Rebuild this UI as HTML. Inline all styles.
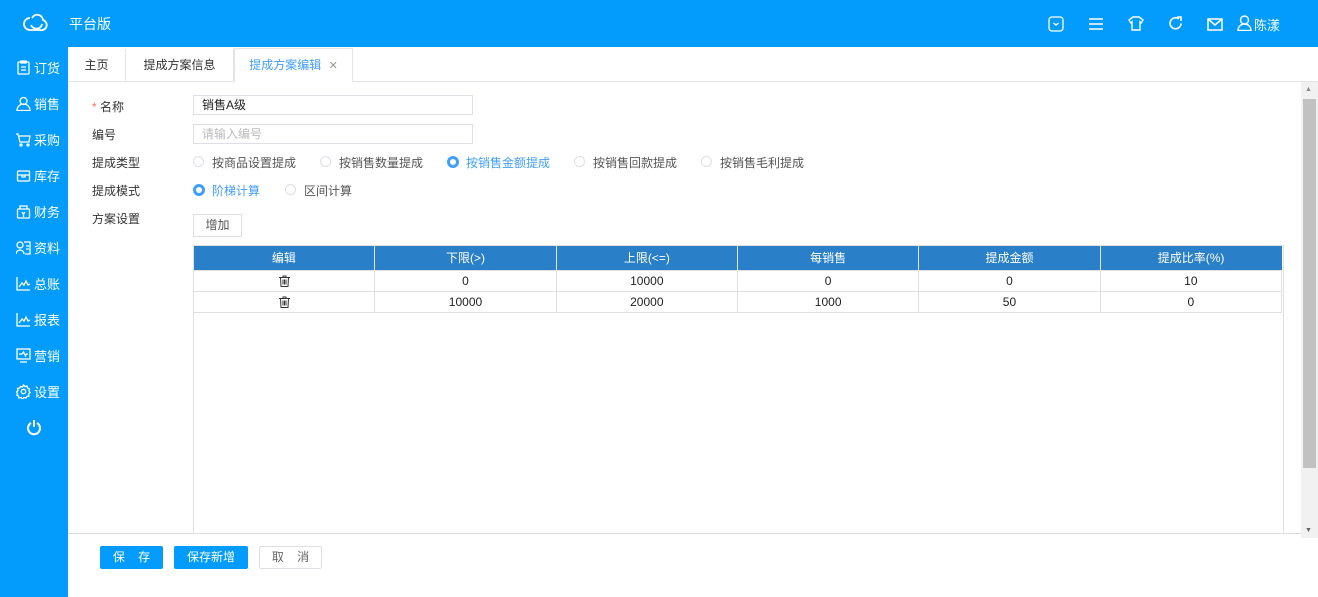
<!DOCTYPE html>
<html><head><meta charset="utf-8"><style>
*{margin:0;padding:0;box-sizing:border-box}
body{width:1318px;height:597px;position:relative;overflow:hidden;background:#fff;font-family:"Liberation Sans","Noto Sans CJK SC",sans-serif;font-size:12px;color:#333}
.a{position:absolute}
.top{left:0;top:0;width:1318px;height:47px;background:#039cfd}
.side{left:0;top:47px;width:68px;height:550px;background:#039cfd}
.nav{left:16px;color:#fff;font-size:13px;display:flex;align-items:center;gap:3px}
.nav svg{width:15px;height:15px}
.tabs{left:68px;top:47px;width:1250px;height:35px;border-bottom:1px solid #e4e4e4;background:#fff}
.tab{top:49px;height:33px;line-height:33px;font-size:12px;text-align:center;border-right:1px solid #e4e4e4}
.lbl{left:92px;font-size:12px;color:#333}
.inp{left:193px;width:280px;height:20px;border:1px solid #dcdfe6;padding-left:8px;line-height:18px;font-size:12px}
.r{width:11px;height:11px;border:1px solid #dcdfe6;border-radius:50%}
.r.on{border:3px solid #409eff;background:#fff;width:12px;height:12px}
.rt{font-size:12px;color:#555}
table{border-collapse:collapse;position:absolute;left:193px;top:246px;width:1089px;table-layout:fixed}
th{background:#2a7fc9;color:#fff;font-weight:normal;height:24px;border-right:1px solid #e6e6e6;font-size:12px}
td{height:21px;border:1px solid #e0e0e0;text-align:center;font-size:12px;color:#222}
td svg{vertical-align:middle}
.btn{top:546px;height:23px;line-height:23px;text-align:center;font-size:12px;border-radius:2px}
</style></head><body>
<div class="a top"></div>
<svg class="a" style="left:22px;top:12px" width="26" height="22" viewBox="0 0 26 22" fill="none" stroke="#fff" stroke-width="1.8"><path d="M8 18a6 6 0 0 1 0-12M10 6c3-5 10-4 11 2a5 5 0 0 1-3 10H8"/><path d="M9 13c2 5 10 5 11-1"/></svg>
<div class="a" style="left:69px;top:14px;color:#fff;font-size:14px">平台版</div>
<svg class="a" style="left:1048px;top:16px" width="16" height="16" viewBox="0 0 16 16" fill="none" stroke="#fff" stroke-width="1.3"><rect x="1" y="1" width="14" height="14" rx="3"/><path d="M5.5 7l2.5 2 2.5-2"/></svg>
<svg class="a" style="left:1089px;top:17px" width="14" height="14" viewBox="0 0 14 14" stroke="#fff" stroke-width="1.6"><path d="M0 2h14M0 7h14M0 12h14"/></svg>
<svg class="a" style="left:1128px;top:16px" width="16" height="15" viewBox="0 0 16 15" fill="none" stroke="#fff" stroke-width="1.4"><path d="M5 1h6l4 3-2 3-1-1v8H4V6L3 7 1 4z"/></svg>
<svg class="a" style="left:1168px;top:16px" width="15" height="15" viewBox="0 0 15 15" fill="none" stroke="#fff" stroke-width="1.6"><path d="M13 7.5A5.5 5.5 0 1 1 11 3"/><path d="M9 1h4v4" /></svg>
<svg class="a" style="left:1207px;top:18px" width="16" height="13" viewBox="0 0 16 13" fill="none" stroke="#fff" stroke-width="1.5"><rect x="1" y="1" width="14" height="11"/><path d="M1 1l7 6 7-6"/></svg>
<svg class="a" style="left:1237px;top:15px" width="15" height="16" viewBox="0 0 15 16" fill="none" stroke="#fff" stroke-width="1.4"><circle cx="7.5" cy="5" r="4"/><path d="M1 15.5a6.5 6.5 0 0 1 13 0z"/></svg>
<div class="a" style="left:1254px;top:15px;color:#fff;font-size:13px">陈漾</div>

<div class="a side"></div>
<div class="a nav" style="top:58px"><svg viewBox="0 0 15 15" fill="none" stroke="#fff" stroke-width="1.3"><rect x="2" y="2" width="11" height="12" rx="1"/><path d="M5 1h5v2H5zM5 7h5M5 10h5"/></svg>订货</div>
<div class="a nav" style="top:94px"><svg viewBox="0 0 15 15" fill="none" stroke="#fff" stroke-width="1.3"><circle cx="7.5" cy="5" r="3.5"/><path d="M1 14.5a6.5 6.5 0 0 1 13 0z"/></svg>销售</div>
<div class="a nav" style="top:130px"><svg viewBox="0 0 15 15" fill="none" stroke="#fff" stroke-width="1.3"><path d="M0 2h2l2 8h9l1-6H3"/><circle cx="5" cy="13" r="1"/><circle cx="12" cy="13" r="1"/></svg>采购</div>
<div class="a nav" style="top:166px"><svg viewBox="0 0 15 15" fill="none" stroke="#fff" stroke-width="1.3"><rect x="1.5" y="3" width="12" height="10" rx="1"/><path d="M1.5 7h12M6 7v2h3V7"/></svg>库存</div>
<div class="a nav" style="top:202px"><svg viewBox="0 0 15 15" fill="none" stroke="#fff" stroke-width="1.3"><rect x="1.5" y="5" width="12" height="9" rx="1"/><path d="M4 5V2h7v3M6 8l1.5 2L9 8M7.5 10v3"/></svg>财务</div>
<div class="a nav" style="top:238px"><svg viewBox="0 0 15 15" fill="none" stroke="#fff" stroke-width="1.3"><circle cx="4" cy="5" r="3"/><path d="M0 14a4 4 0 0 1 8 0M8 2h6v12H9M10 6h3M10 9h3"/></svg>资料</div>
<div class="a nav" style="top:274px"><svg viewBox="0 0 15 15" fill="none" stroke="#fff" stroke-width="1.3"><path d="M1 1v13h13M3 11l3-4 2 2 2-4 2 4 2-1"/></svg>总账</div>
<div class="a nav" style="top:310px"><svg viewBox="0 0 15 15" fill="none" stroke="#fff" stroke-width="1.3"><path d="M1 1v13h13M3 11l3-4 2 2 2-4 2 4 2-1"/></svg>报表</div>
<div class="a nav" style="top:346px"><svg viewBox="0 0 15 15" fill="none" stroke="#fff" stroke-width="1.3"><rect x="1" y="1" width="13" height="10"/><path d="M4 14h7M3 6h3l1.5-2 2 4 1-2H12"/></svg>营销</div>
<div class="a nav" style="top:382px"><svg viewBox="0 0 15 15" fill="none" stroke="#fff" stroke-width="1.3"><circle cx="7.5" cy="7.5" r="2.2"/><path d="M7.5 1l1.5 1.5 2-.5.5 2L13.5 5l-.5 2 1 1.5-1.5 1.5.5 2-2 .5-1 1.5-2-.5-1.5 1.5-1.5-1.5-2 .5-.5-2L1 11.5l.5-2L.5 8 2 6.5l-.5-2 2-.5 1-1.5 2 .5z"/></svg>设置</div>
<svg class="a" style="left:26px;top:419px" width="16" height="17" viewBox="0 0 16 17" fill="none" stroke="#fff" stroke-width="2"><path d="M5 4a6 6 0 1 0 6 0M8 1v7"/></svg>

<div class="a tabs"></div>
<div class="a tab" style="left:68px;width:58px;color:#333">主页</div>
<div class="a tab" style="left:126px;width:108px;color:#333">提成方案信息</div>
<div class="a tab" style="left:234px;width:119px;color:#409eff;border-left:1px solid #e4e4e4;border-top:1px solid #e4e4e4;border-bottom:1px solid #fff;height:34px;top:48px">提成方案编辑 <span style="color:#999;font-size:11px;margin-left:4px">✕</span></div>

<div class="a lbl" style="top:98px"><span style="color:#f56c6c">* </span>名称</div>
<div class="a inp" style="top:95px;color:#222">销售A级</div>
<div class="a lbl" style="top:126px">编号</div>
<div class="a inp" style="top:124px;color:#bbb">请输入编号</div>
<div class="a lbl" style="top:154px">提成类型</div>
<div class="a r" style="left:193px;top:156px"></div><div class="a rt" style="left:212px;top:154px">按商品设置提成</div>
<div class="a r" style="left:320px;top:156px"></div><div class="a rt" style="left:339px;top:154px">按销售数量提成</div>
<div class="a r on" style="left:447px;top:156px"></div><div class="a rt" style="left:466px;top:154px;color:#409eff">按销售金额提成</div>
<div class="a r" style="left:574px;top:156px"></div><div class="a rt" style="left:593px;top:154px">按销售回款提成</div>
<div class="a r" style="left:701px;top:156px"></div><div class="a rt" style="left:720px;top:154px">按销售毛利提成</div>
<div class="a lbl" style="top:182px">提成模式</div>
<div class="a r on" style="left:193px;top:184px"></div><div class="a rt" style="left:212px;top:182px;color:#409eff">阶梯计算</div>
<div class="a r" style="left:285px;top:184px"></div><div class="a rt" style="left:304px;top:182px">区间计算</div>
<div class="a lbl" style="top:210px">方案设置</div>
<div class="a" style="left:193px;top:214px;width:49px;height:23px;border:1px solid #dcdfe6;text-align:center;line-height:21px;color:#555">增加</div>

<div class="a" style="left:193px;top:245px;width:1091px;height:289px;border:1px solid #e0e0e0"></div>
<table>
<tr><th>编辑</th><th>下限(&gt;)</th><th>上限(&lt;=)</th><th>每销售</th><th>提成金额</th><th style="border-right:0">提成比率(%)</th></tr>
<tr><td><svg width="11" height="12" viewBox="0 0 11 12" fill="none" stroke="#333" stroke-width="1"><path d="M0 2.5h11M4 2.5V1h3v1.5M1.5 2.5l.5 9h7l.5-9M4 4.5v5M5.5 4.5v5M7 4.5v5"/></svg></td><td>0</td><td>10000</td><td>0</td><td>0</td><td>10</td></tr>
<tr><td><svg width="11" height="12" viewBox="0 0 11 12" fill="none" stroke="#333" stroke-width="1"><path d="M0 2.5h11M4 2.5V1h3v1.5M1.5 2.5l.5 9h7l.5-9M4 4.5v5M5.5 4.5v5M7 4.5v5"/></svg></td><td>10000</td><td>20000</td><td>1000</td><td>50</td><td>0</td></tr>
</table>
<div class="a" style="left:68px;top:533px;width:1233px;height:1px;background:#ddd"></div>
<div class="a" style="left:1301px;top:82px;width:17px;height:456px;background:#f1f1f1"></div>
<div class="a" style="left:1303px;top:99px;width:13px;height:369px;background:#c1c1c1"></div>
<div class="a" style="left:1305px;top:86px;color:#888;font-size:7px">▲</div>
<div class="a" style="left:1305px;top:527px;color:#666;font-size:7px">▼</div>

<div class="a btn" style="left:100px;width:63px;background:#039cfd;color:#fff">保&nbsp;&nbsp;&nbsp;&nbsp;存</div>
<div class="a btn" style="left:174px;width:74px;background:#039cfd;color:#fff">保存新增</div>
<div class="a btn" style="left:259px;width:63px;border:1px solid #dcdfe6;color:#666;line-height:21px">取&nbsp;&nbsp;&nbsp;&nbsp;消</div>
</body></html>
